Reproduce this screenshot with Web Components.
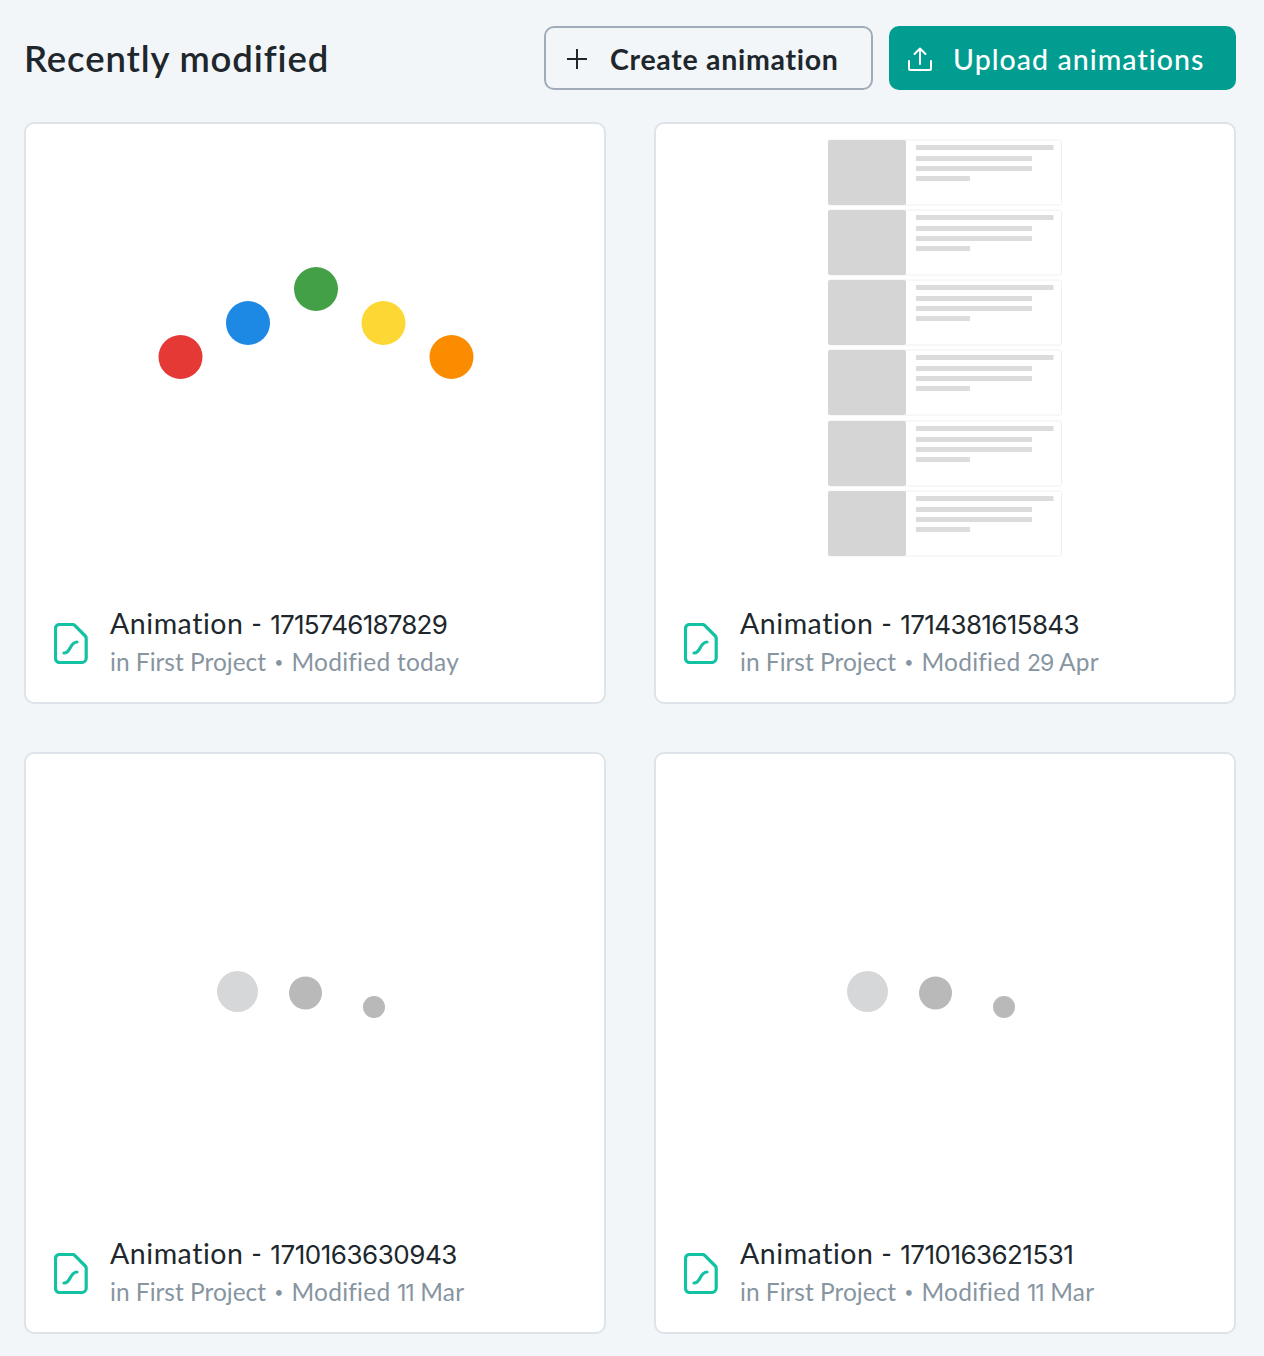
<!DOCTYPE html>
<html lang="en"><head><meta charset="utf-8"><title>Recently modified</title>
<style>
html,body{margin:0;padding:0;background:#f3f6f9;font-family:Lato,"Noto Sans",sans-serif;color:#20272c}
</style></head><body>
<dash-page>
  <dash-header slot="header" heading="Recently modified">
    <dash-button icon="plus">Create animation</dash-button>
    <dash-button icon="upload" primary>Upload animations</dash-button>
  </dash-header>
  <anim-card label="Animation -" num="1715746187829" fit="-.78" meta="Modified today"><dots-preview></dots-preview></anim-card>
  <anim-card label="Animation -" num="1714381615843" fit="-.63" meta="Modified 29 Apr"><list-preview></list-preview></anim-card>
  <anim-card label="Animation -" num="1710163630943" fit="-.47" meta="Modified 11 Mar"><loader-preview></loader-preview></anim-card>
  <anim-card label="Animation -" num="1710163621531" fit="-.55" meta="Modified 11 Mar"><loader-preview></loader-preview></anim-card>
</dash-page>
<script>
const FONT='Lato,"Noto Sans",sans-serif';
class Base extends HTMLElement{
  render(html){ if(!this.shadowRoot) this.attachShadow({mode:'open'}); this.shadowRoot.innerHTML=html; }
  connectedCallback(){ this.render(this.markup()); }
}
customElements.define('dash-page',class extends Base{markup(){return `<style>
:host{display:block;box-sizing:border-box;width:1264px;height:1356px;padding:26px 28px 22px 24px}
.grid{display:grid;grid-template-columns:582px 582px;grid-auto-rows:582px;gap:48px;margin-top:32px}
</style><slot name="header"></slot><div class="grid"><slot></slot></div>`}});
customElements.define('dash-header',class extends Base{markup(){return `<style>
:host{display:flex;align-items:center;justify-content:space-between;height:64px}
h1{margin:0;font:600 36.500px/64px ${FONT};letter-spacing:.87px;color:#20272c}
.actions{display:flex;gap:16px}
</style><h1>${this.getAttribute('heading')}</h1><div class="actions"><slot></slot></div>`}});
const ICONS={
 plus:`<svg width="20" height="20" viewBox="0 0 20 20" fill="none" stroke="currentColor" stroke-width="2"><path d="M10 0v20M0 10h20"/></svg>`,
 upload:`<svg width="24" height="24" viewBox="0 0 24 24" fill="none" stroke="currentColor" stroke-width="2" stroke-linecap="round" stroke-linejoin="round"><path d="M1 14v7.500a1.500 1.500 0 0 0 1.500 1.500h19a1.500 1.500 0 0 0 1.500-1.500V14"/><path d="M12 17V1.500M6.500 7 12 1.500 17.500 7"/></svg>`
};
customElements.define('dash-button',class extends Base{markup(){
 const p=this.hasAttribute('primary');return `<style>
:host{display:block}
.b{box-sizing:border-box;height:64px;display:flex;align-items:center;border-radius:10px;font:700 28.500px/32px ${FONT};white-space:nowrap;
 ${p?'width:347px;padding:0 0 0 19px;gap:21px;background:#019d91;color:#fff;border:0;font-weight:500;letter-spacing:1.05px':'width:329px;padding:0 0 0 21px;gap:23px;background:transparent;color:#20272c;border:2px solid #a1acb9;letter-spacing:.7px'}}
.i{display:flex;flex:none;margin-top:2px}
.l{padding-top:1px}
</style><div class="b"><span class="i">${ICONS[this.getAttribute('icon')]}</span><span class="l"><slot></slot></span></div>`}});
customElements.define('file-icon',class extends Base{markup(){return `<style>:host{display:block;width:34px;height:41px;flex:none;margin-top:3px}svg{display:block}</style>
<svg width="34" height="41" viewBox="0 0 34 41" fill="none" stroke="#12c2a2" stroke-width="3.200" stroke-linecap="round" stroke-linejoin="round"><path d="M5.500 1.500h13a3 3 0 0 1 2.200.900L31.300 13a3 3 0 0 1 .9 2.200V35a4.500 4.500 0 0 1-4.500 4.500H5.500A4 4 0 0 1 1.500 35.500V5.500A4 4 0 0 1 5.500 1.500Z"/><path d="M10 30c7 0 5.500-11 13-11"/></svg>`}});
const digits=s=>s.replace(/\d+/g,m=>`<span class="n">${m}</span>`);
customElements.define('anim-card',class extends Base{markup(){return `<style>
:host{display:flex;flex-direction:column;box-sizing:border-box;width:582px;height:582px;background:#fff;border:2px solid #dde3e8;border-radius:10px;overflow:hidden}
.thumb{height:460px;flex:none}
.info{display:flex;align-items:center;gap:22px;padding:21px 0 0 28px}
.t{font:400 28.500px/36px ${FONT};letter-spacing:.55px;color:#20272c;white-space:nowrap}
.t .num{font:400 26px/36px Inter,sans-serif}
.m{font:400 24.500px/32px ${FONT};color:#8795a1;margin-top:3px;white-space:nowrap;display:flex}
.m .n{font:400 23px/32px Inter,sans-serif;letter-spacing:-1px}
.m .when{letter-spacing:.25px}
.dot{margin:0 8.300px;font-size:15px}
</style><div class="thumb"><slot></slot></div><div class="info"><file-icon></file-icon><div><div class="t">${this.getAttribute('label')} <span class="num" style="letter-spacing:${this.getAttribute('fit')}px">${this.getAttribute('num')}</span></div><div class="m"><span>in First Project</span><span class="dot">•</span><span class="when">${digits(this.getAttribute('meta'))}</span></div></div></div>`}});
const svgWrap=(inner,blur=.6)=>`<style>:host{display:block;width:578px;height:460px}svg{display:block;filter:blur(${blur}px)}</style><svg width="578" height="460" viewBox="0 0 578 460">${inner}</svg>`;
customElements.define('dots-preview',class extends Base{markup(){
 const d=[[154.500,233,'#e53935'],[222,199,'#1e88e5'],[290,165,'#43a047'],[357.500,199,'#fdd835'],[425.500,233,'#fb8c00']];
 return svgWrap(d.map(([x,y,c])=>`<circle cx="${x}" cy="${y}" r="22" fill="${c}"/>`).join(''))}});
customElements.define('loader-preview',class extends Base{markup(){
 return svgWrap(`<circle cx="211.500" cy="237.500" r="20.500" fill="#d6d7d9"/><circle cx="279.500" cy="239" r="16.500" fill="#b9b9b9"/><circle cx="348" cy="253" r="11" fill="#b9b9b9"/>`)}});
customElements.define('list-preview',class extends Base{markup(){
 const ys=[16,86,156,226,297,367];
 return svgWrap(ys.map(y=>`<rect x="172.500" y="${y}" width="233" height="65" rx="2" fill="#fff" stroke="#f0f0f0"/><rect x="172" y="${y}" width="78" height="65" rx="2" fill="#d5d5d5"/>
 <rect x="260" y="${y+5}" width="137.500" height="5" fill="#dcdcdc"/><rect x="260" y="${y+16}" width="116" height="5" fill="#dcdcdc"/><rect x="260" y="${y+26}" width="116" height="5" fill="#dcdcdc"/><rect x="260" y="${y+36}" width="54" height="5" fill="#dcdcdc"/>`).join(''))}});
</script></body></html>
